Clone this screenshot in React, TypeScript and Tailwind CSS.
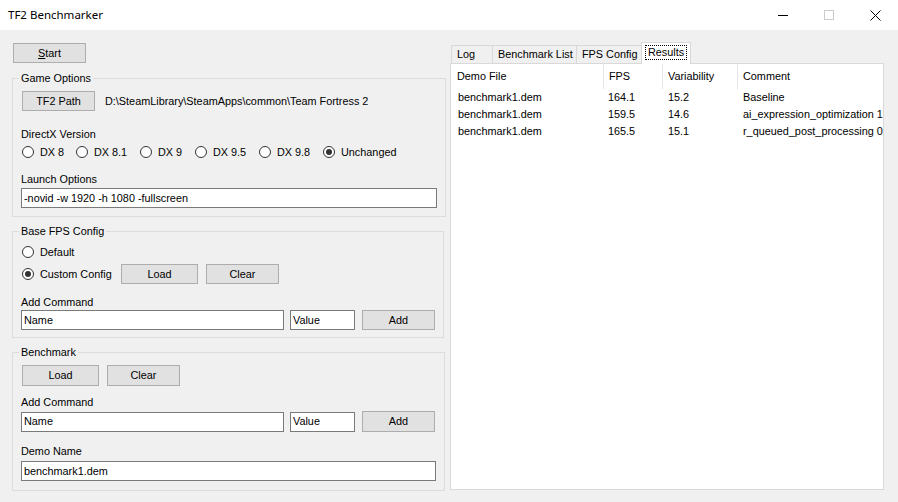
import { ReactNode } from "react";

const ui = { fontFamily: '"Liberation Sans", Arial, sans-serif' };

function Button({ children, className = "" }: { children: ReactNode; className?: string }) {
  return (
    <div
      className={`flex items-center justify-center bg-[#e1e1e1] border border-[#adadad] text-[10.85px] text-black leading-none ${className}`}
    >
      {children}
    </div>
  );
}

function TextBox({ value, className = "" }: { value: string; className?: string }) {
  return (
    <div
      className={`flex items-center h-[20px] bg-white border border-[#7a7a7a] pl-[2px] text-[10.85px] text-black whitespace-nowrap overflow-hidden ${className}`}
    >
      {value}
    </div>
  );
}

function Radio({ label, checked = false, className = "" }: { label: string; checked?: boolean; className?: string }) {
  return (
    <div className={`flex items-center h-[14px] text-[10.85px] text-black whitespace-nowrap ${className}`}>
      <span className="w-[12px] h-[12px] rounded-full border border-[#333] bg-white flex items-center justify-center shrink-0">
        {checked && <span className="w-[6px] h-[6px] rounded-full bg-[#333]" />}
      </span>
      <span className="ml-[6px]">{label}</span>
    </div>
  );
}

function Group({ title, children, className = "" }: { title: string; children: ReactNode; className?: string }) {
  return (
    <fieldset className={`block border border-[#dcdcdc] px-[8px] ${className}`}>
      <legend className="-ml-[2px] px-[2px] text-[10.85px] leading-[14px] text-black">{title}</legend>
      <div className="flex flex-col">{children}</div>
    </fieldset>
  );
}

function Label({ children, className = "" }: { children: ReactNode; className?: string }) {
  return <div className={`text-[10.85px] leading-[14px] text-black ${className}`}>{children}</div>;
}

const results = [
  { file: "benchmark1.dem", fps: "164.1", vari: "15.2", comment: "Baseline" },
  { file: "benchmark1.dem", fps: "159.5", vari: "14.6", comment: "ai_expression_optimization 1" },
  { file: "benchmark1.dem", fps: "165.5", vari: "15.1", comment: "r_queued_post_processing 0" },
];

export default function App() {
  return (
    <div className="w-[898px] h-[502px] bg-[#f0f0f0] flex flex-col overflow-hidden" style={ui}>
      {/* Title bar */}
      <div className="h-[30px] bg-white flex items-center shrink-0">
        <span
          className="ml-[8px] text-[11.5px] text-black"
          style={{ fontFamily: '"Segoe UI", "Noto Sans", sans-serif' }}
        >
          TF2 Benchmarker
        </span>
        <div className="ml-auto flex h-full">
          <div className="w-[46px] h-full flex items-center justify-center">
            <span className="w-[10px] h-px bg-black" />
          </div>
          <div className="w-[46px] h-full flex items-center justify-center">
            <span className="w-[10px] h-[10px] border border-[#cccccc]" />
          </div>
          <div className="w-[46px] h-full flex items-center justify-center">
            <svg width="11" height="11" viewBox="0 0 11 11">
              <path d="M0.5 0.5L10.5 10.5M10.5 0.5L0.5 10.5" stroke="#000" strokeWidth="1" />
            </svg>
          </div>
        </div>
      </div>

      <div className="flex flex-1">
        {/* Left column */}
        <div className="ml-[12px] w-[431px] flex flex-col">
          <Button className="mt-[13px] ml-[1px] w-[73px] h-[20px]">
            <span>
              <span className="underline">S</span>tart
            </span>
          </Button>

          <Group title="Game Options" className="mt-[8px] pb-[8px]">
            <div className="mt-[6px] flex items-center">
              <Button className="ml-[1px] w-[73px] h-[20px]">TF2 Path</Button>
              <span className="ml-[10px] text-[10.85px]">D:\SteamLibrary\SteamApps\common\Team Fortress 2</span>
            </div>
            <Label className="mt-[16px]">DirectX Version</Label>
            <div className="mt-[4px] flex ml-[1px]">
              <Radio label="DX 8" className="w-[54px]" />
              <Radio label="DX 8.1" className="w-[64px]" />
              <Radio label="DX 9" className="w-[55px]" />
              <Radio label="DX 9.5" className="w-[64px]" />
              <Radio label="DX 9.8" className="w-[64px]" />
              <Radio label="Unchanged" checked />
            </div>
            <Label className="mt-[13px]">Launch Options</Label>
            <TextBox value="-novid -w 1920 -h 1080 -fullscreen" className="mt-[2px] w-[416px]" />
          </Group>

          <Group title="Base FPS Config" className="mt-[7px] pb-[7px]">
            <Radio label="Default" className="mt-[7px] ml-[1px]" />
            <div className="mt-[5px] flex items-center h-[20px]">
              <Radio label="Custom Config" checked className="ml-[1px] w-[99px]" />
              <Button className="w-[77px] h-[20px]">Load</Button>
              <Button className="ml-[8px] w-[73px] h-[20px]">Clear</Button>
            </div>
            <Label className="mt-[11px]">Add Command</Label>
            <div className="mt-[1px] flex items-center">
              <TextBox value="Name" className="w-[263px]" />
              <TextBox value="Value" className="ml-[6px] w-[65px]" />
              <Button className="ml-[7px] w-[73px] h-[20px]">Add</Button>
            </div>
          </Group>

          <Group title="Benchmark" className="mt-[7px] pb-[9px]">
            <div className="mt-[6px] flex">
              <Button className="ml-[1px] w-[77px] h-[21px]">Load</Button>
              <Button className="ml-[8px] w-[73px] h-[21px]">Clear</Button>
            </div>
            <Label className="mt-[9px]">Add Command</Label>
            <div className="mt-[2px] flex items-center">
              <TextBox value="Name" className="w-[263px]" />
              <TextBox value="Value" className="ml-[6px] w-[65px]" />
              <Button className="ml-[7px] w-[73px] h-[21px]">Add</Button>
            </div>
            <Label className="mt-[12px]">Demo Name</Label>
            <TextBox value="benchmark1.dem" className="mt-[3px] w-[415px]" />
          </Group>
        </div>

        {/* Right column: tab control */}
        <div className="ml-[7px] w-[434px] flex flex-col">
          <div className="mt-[12px] flex items-end h-[21px] ml-[1px]">
            {["Log", "Benchmark List", "FPS Config"].map((t, i) => (
              <div
                key={t}
                className={`h-[18px] border-t border-r border-[#d9d9d9] bg-[#f0f0f0] text-[10.85px] pl-[5px] flex items-center ${
                  i === 0 ? "border-l w-[42px]" : i === 1 ? "w-[84px]" : "w-[66px]"
                }`}
              >
                {t}
              </div>
            ))}
            <div className="relative z-10 -ml-[2px] -mb-px h-[22px] w-[50px] bg-white border-t border-l border-r border-[#d9d9d9] flex items-start justify-center pt-[2px]">
              <span className="border border-dotted border-black px-[2px] leading-[13px] text-[10.85px]">Results</span>
            </div>
          </div>
          <div className="h-[427px] bg-white border border-[#d9d9d9] flex flex-col overflow-hidden">
            <div className="flex h-[25px] text-[10.85px] items-center">
              <div className="w-[152px] pl-[6px]">Demo File</div>
              <div className="w-[59px] pl-[5px] h-full flex items-center border-l border-[#e5e5e5]">FPS</div>
              <div className="w-[75px] pl-[5px] h-full flex items-center border-l border-[#e5e5e5]">Variability</div>
              <div className="flex-1 pl-[5px] h-full flex items-center border-l border-[#e5e5e5]">Comment</div>
            </div>
            {results.map((r, i) => (
              <div key={i} className="flex h-[17px] items-center text-[10.85px] whitespace-nowrap">
                <div className="w-[152px] pl-[7px]">{r.file}</div>
                <div className="w-[59px] pl-[5px]">{r.fps}</div>
                <div className="w-[75px] pl-[6px]">{r.vari}</div>
                <div className="flex-1 pl-[6px]">{r.comment}</div>
              </div>
            ))}
          </div>
        </div>
      </div>
    </div>
  );
}
